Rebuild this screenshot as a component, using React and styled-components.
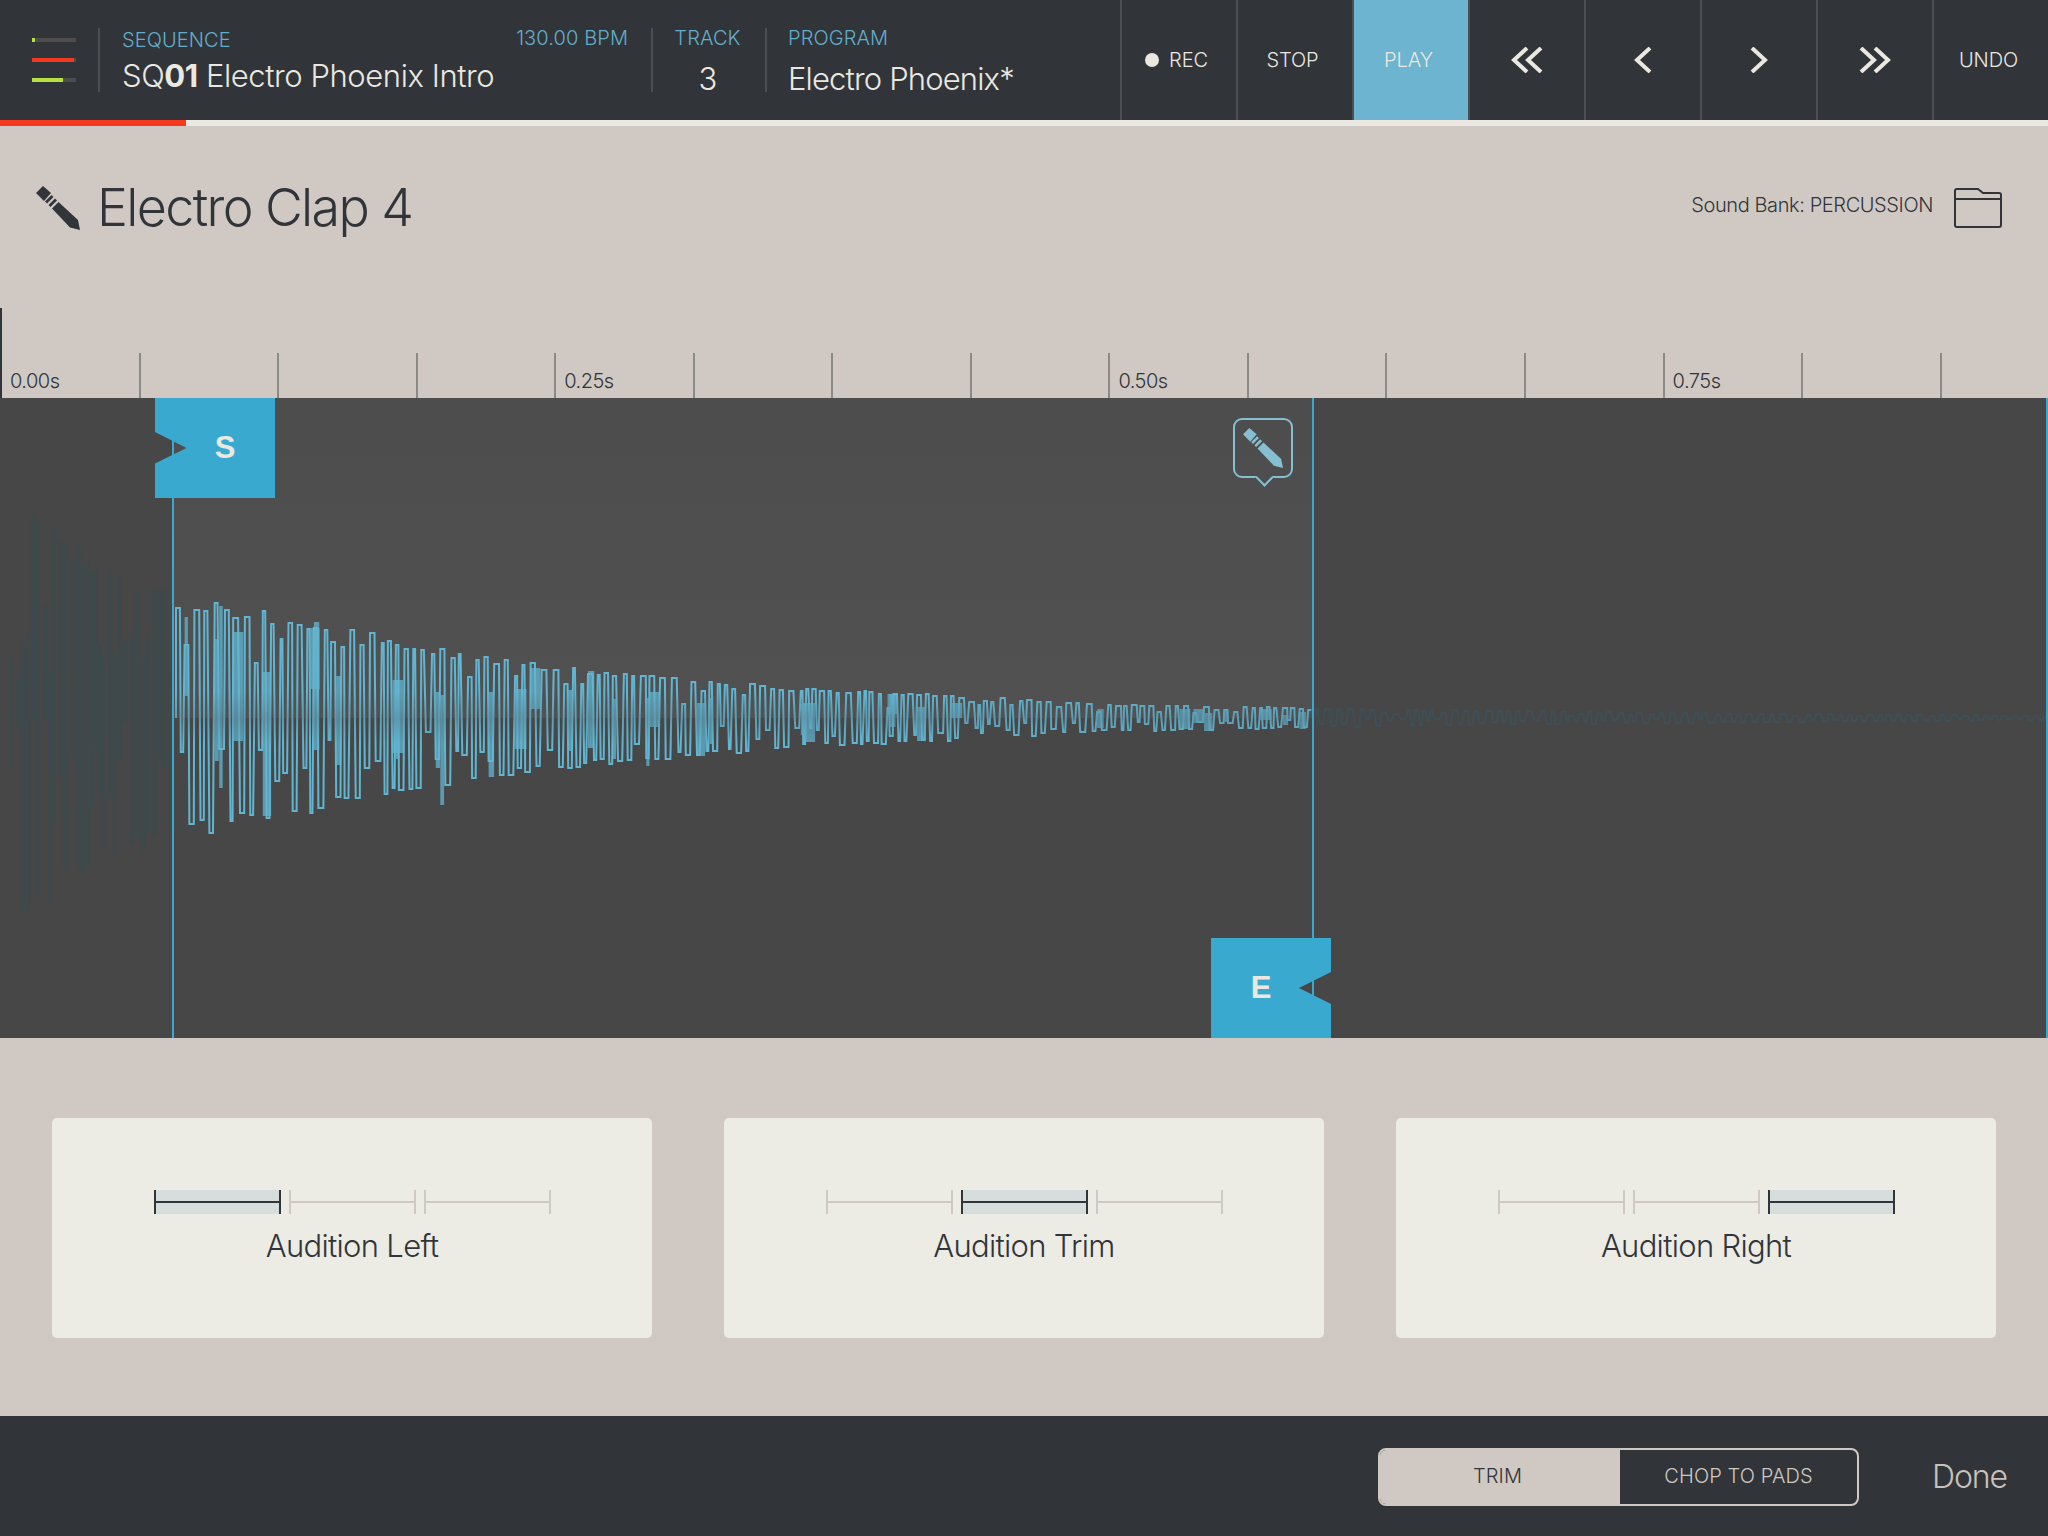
import React from "react";
import styled, { createGlobalStyle } from "styled-components";

const GlobalStyle = createGlobalStyle`
  html, body {
    margin: 0;
    padding: 0;
    background: #d0c9c3;
    font-family: "Inter", "Liberation Sans", sans-serif;
    font-weight: 300;
  }
  * { box-sizing: border-box; }
`;

const Page = styled.div`
  width: 2048px;
  height: 1536px;
  display: flex;
  flex-direction: column;
  overflow: hidden;
  background: #d0c9c3;
`;

/* top bar */
const TopBar = styled.header`
  height: 120px;
  display: flex;
  align-items: center;
  background: #313539;
  color: #ebe8e1;
`;

const Meters = styled.div`
  width: 98px;
  padding-left: 32px;
  display: flex;
  flex-direction: column;
  gap: 16px;
`;

const MeterTrack = styled.div`
  width: 44px;
  height: 4px;
  background: #4d4d4d;
`;

const MeterFill = styled.div`
  height: 100%;
  background: ${(p) => p.$color};
`;

const VDivider = styled.div`
  width: 2px;
  height: 64px;
  background: #4c4e50;
  flex: 0 0 auto;
`;

const InfoBlock = styled.div`
  width: ${(p) => p.$width}px;
  height: 64px;
  padding: 0 ${(p) => p.$right || 0}px 0 ${(p) => p.$left || 0}px;
  display: flex;
  flex-direction: column;
  align-items: ${(p) => (p.$center ? "center" : "stretch")};
`;

const LabelRow = styled.div`
  flex: 0 0 auto;
  display: flex;
  justify-content: space-between;
  height: 30px;
`;

const Label = styled.span`
  font-size: 20px;
  line-height: 20px;
  letter-spacing: 0.1px;
  color: #62aecb;
  margin-top: ${(p) => p.$top || 0}px;
`;

const InfoValue = styled.div`
  flex: 0 0 auto;
  font-size: 31px;
  line-height: 34px;
  letter-spacing: ${(p) => p.$spacing ?? -0.85}px;
  white-space: nowrap;
  margin-top: ${(p) => p.$top || 0}px;
  b {
    font-weight: 700;
  }
`;

const Transport = styled.nav`
  flex: 1;
  height: 120px;
  display: flex;
`;

const TransportButton = styled.button`
  flex: 1;
  height: 100%;
  padding: 0;
  border: 0;
  border-left: 2px solid #4c4e50;
  background: ${(p) => (p.$active ? "#6cb4d0" : "transparent")};
  color: #ebe8e1;
  font-family: inherit;
  font-weight: 300;
  font-size: 20px;
  letter-spacing: -0.1px;
  display: flex;
  align-items: center;
  justify-content: center;
  gap: 10px;
`;

const TransportLabel = styled.span`
  margin-right: 5px;
  display: flex;
  align-items: center;
  gap: 10px;
`;

const RecDot = styled.span`
  width: 14px;
  height: 14px;
  border-radius: 50%;
  background: #ebe8e1;
`;

/* progress strip */
const ProgressStrip = styled.div`
  height: 6px;
  background: #ebe8e1;
`;

const ProgressFill = styled.div`
  height: 100%;
  background: #f4391f;
`;

/* title row */
const TitleRow = styled.div`
  height: 182px;
  padding: 60px 46px 0 36px;
  display: flex;
  align-items: flex-start;
  color: #31353a;
`;

const SampleTitle = styled.h1`
  margin: 0 0 0 17px;
  font-size: 52px;
  line-height: 44px;
  font-weight: 300;
  letter-spacing: -1.65px;
  flex: 1;
`;

const BankName = styled.span`
  font-size: 20px;
  line-height: 24px;
  letter-spacing: -0.4px;
  margin: 7px 21px 0 0;
`;

const FolderWrap = styled.div`
  margin-top: 2px;
`;

/* ruler */
const Ruler = styled.div`
  height: 90px;
  display: flex;
  align-items: flex-end;
  overflow: hidden;
`;

const RulerSegment = styled.div`
  flex: 0 0 138.55px;
  height: ${(p) => (p.$tall ? 90 : 45)}px;
  border-left: 2px solid ${(p) => (p.$tall ? "#31353a" : "#8c8a85")};
  display: flex;
  align-items: flex-end;
  padding: 0 0 6.5px 8px;
  font-size: 20px;
  line-height: 22px;
  letter-spacing: -0.5px;
  color: #31353a;
`;

/* wave panel */
const WavePanel = styled.section`
  position: relative;
  height: 640px;
  background: #474747;
  border-right: 2px solid #3aa9cf;
  overflow: hidden;
`;

const TrimShade = styled.div`
  position: absolute;
  left: 173px;
  top: 0;
  width: 1140px;
  height: 320px;
  background: linear-gradient(#4d4d4d, #515151);
`;

const WaveDrawing = styled.svg`
  position: absolute;
  left: 0;
  top: 0;
`;

const MarkerLine = styled.div`
  position: absolute;
  left: ${(p) => p.$x}px;
  top: 0;
  width: 2px;
  height: 100%;
  background: #3aa9cf;
`;

const Flag = styled.div`
  position: absolute;
  left: ${(p) => p.$x}px;
  top: ${(p) => p.$y}px;
  width: 120px;
  height: 100px;
  background: #3aa9cf;
  color: #ebe8e1;
  font-family: "Liberation Sans", sans-serif;
  font-size: 31px;
  font-weight: 700;
  display: flex;
  align-items: center;
  justify-content: center;
  padding: ${(p) => (p.$side === "left" ? "0 0 0 20px" : "0 20px 0 0")};
  clip-path: ${(p) =>
    p.$side === "left"
      ? "polygon(0 0, 100% 0, 100% 100%, 0 100%, 0 65.5%, 31.5px 50%, 0 34%)"
      : "polygon(0 0, 100% 0, 100% 34%, 88px 50%, 100% 66%, 100% 100%, 0 100%)"};
`;

const EditBubble = styled.div`
  position: absolute;
  left: 1233px;
  top: 20px;
  width: 60px;
  height: 60px;
  border: 2px solid #86bfd2;
  border-radius: 9px;
  display: flex;
  align-items: center;
  justify-content: center;
  &::after {
    content: "";
    position: absolute;
    left: 23px;
    bottom: -8px;
    width: 11px;
    height: 11px;
    background: #4e4e4e;
    border-right: 2px solid #86bfd2;
    border-bottom: 2px solid #86bfd2;
    transform: rotate(45deg);
  }
`;

/* audition cards */
const AuditionRow = styled.section`
  height: 378px;
  padding: 80px 52px 0;
  display: grid;
  grid-template-columns: repeat(3, 600px);
  column-gap: 72px;
  align-items: start;
`;

const AuditionCard = styled.div`
  height: 220px;
  background: #ecebe4;
  border-radius: 5px;
  padding-top: 72px;
  display: flex;
  flex-direction: column;
  align-items: center;
  color: #31353a;
`;

const RangeBar = styled.div`
  display: flex;
  gap: 8px;
`;

const RangePart = styled.div`
  width: 127px;
  height: 24px;
  background: ${(p) => (p.$on ? "#d5dedd" : "transparent")};
  border-left: 2px solid ${(p) => (p.$on ? "#31353a" : "#d0c9c3")};
  border-right: 2px solid ${(p) => (p.$on ? "#31353a" : "#d0c9c3")};
  display: flex;
  align-items: center;
  &::before {
    content: "";
    display: block;
    width: 100%;
    height: 2px;
    background: ${(p) => (p.$on ? "#31353a" : "#d0c9c3")};
  }
`;

const AuditionLabel = styled.div`
  margin-top: 13px;
  font-size: 31px;
  line-height: 38px;
  letter-spacing: -0.7px;
`;

/* bottom bar */
const BottomBar = styled.footer`
  height: 120px;
  background: #313539;
  display: flex;
  align-items: center;
  justify-content: flex-end;
  padding: 0 41px 0 0;
`;

const ModeSwitch = styled.div`
  width: 481px;
  height: 58px;
  margin: 2px 73px 0 0;
  border: 2px solid #d0c9c3;
  border-radius: 8px;
  overflow: hidden;
  display: grid;
  grid-template-columns: 240px 1fr;
`;

const ModeOption = styled.button`
  border: 0;
  padding: 0 ${(p) => (p.$active ? 5 : 0)}px 2px 0;
  background: ${(p) => (p.$active ? "#d0c9c3" : "transparent")};
  color: ${(p) => (p.$active ? "#31353a" : "#d0c9c3")};
  font-family: inherit;
  font-weight: 300;
  font-size: 20px;
  letter-spacing: 0.1px;
`;

const DoneButton = styled.button`
  border: 0;
  padding: 0;
  background: transparent;
  color: #c9c2bc;
  font-family: inherit;
  font-weight: 300;
  font-size: 32px;
  letter-spacing: -1.1px;
`;

const PencilIcon = ({ size = 44, color = "#31353a" }) => (
  <svg width={size} height={size} viewBox="0 0 44 44" fill={color}>
    <polygon points="0,7 7,0 15,7 8,15" />
    <polygon points="9,15.5 15.5,9 17.5,11 11,17.5" />
    <polygon points="12.5,19 19,12.5 21,14.5 14.5,21" />
    <polygon points="16,22.5 22.5,16 42,34 44,44 34,41.5" />
  </svg>
);

const FolderIcon = () => (
  <svg width="48" height="40" viewBox="0 0 48 40" fill="none" stroke="#31353a" strokeWidth="2">
    <path d="M1 3a2 2 0 0 1 2-2h21l5 4h16a2 2 0 0 1 2 2v30a2 2 0 0 1-2 2H3a2 2 0 0 1-2-2z" />
    <path d="M1 11h46" />
  </svg>
);

const Chevrons = ({ dir, count }) => {
  const width = count === 2 ? 32 : 18;
  const pts = [];
  for (let i = 0; i < count; i++) {
    const o = i * 14;
    pts.push(dir === "left" ? `${16 + o},1 ${3 + o},13 ${16 + o},25` : `${2 + o},1 ${15 + o},13 ${2 + o},25`);
  }
  return (
    <svg width={width} height="26" viewBox={`0 0 ${width} 26`} fill="none" stroke="#ebe8e1" strokeWidth="4">
      {pts.map((p) => (
        <polyline key={p} points={p} />
      ))}
    </svg>
  );
};

/* the wave is made up, seeded so that it is the same every time */
function makeRandom(seed) {
  let s = seed;
  return () => {
    s = (s * 1664525 + 1013904223) % 4294967296;
    return s / 4294967296;
  };
}

function envelope(points, x) {
  for (let i = 1; i < points.length; i++) {
    if (x <= points[i][0]) {
      const [x0, a0] = points[i - 1];
      const [x1, a1] = points[i];
      return a0 + ((a1 - a0) * (x - x0)) / (x1 - x0);
    }
  }
  return points[points.length - 1][1];
}

const CY = 320;

function makeWave(from, to, env, seed, minStep, maxStep) {
  const rnd = makeRandom(seed);
  let x = from;
  let up = true;
  let d = `M${from} ${CY}`;
  const blocks = [];
  while (x < to - 2) {
    const a = envelope(env, x);
    const r = rnd();
    const depth = up
      ? r < 0.75
        ? 1 - rnd() * 0.12
        : 0.35 + rnd() * 0.5
      : r < 0.6
        ? 1 - rnd() * 0.15
        : 0.15 + rnd() * 0.6;
    const y = Math.round(CY + (up ? -a : a) * depth);
    const flat = 1.5 + rnd() * 3.5;
    d += `L${x.toFixed(1)} ${y}L${Math.min(x + flat, to).toFixed(1)} ${y}`;
    const w = 3 + rnd() * 9;
    if (rnd() < 0.16 && x + w < to) {
      blocks.push({
        x,
        w,
        y: Math.round(CY - a * (0.3 + rnd() * 0.7)),
        h: Math.round(a * (0.6 + rnd() * 1.1)),
      });
    }
    x += flat + minStep + rnd() * (maxStep - minStep);
    up = !up;
  }
  return { d, blocks };
}

function makeBars(from, to, env, seed) {
  const rnd = makeRandom(seed);
  let d = "";
  for (let x = from; x < to; x += 3 + rnd() * 5) {
    const a = envelope(env, x);
    const top = 317 - a * (rnd() < 0.6 ? 0.9 + rnd() * 0.1 : 0.2 + rnd() * 0.5);
    const bottom = 317 + a * (rnd() < 0.5 ? 0.85 + rnd() * 0.15 : rnd() * 0.6);
    d += `M${x.toFixed(1)} ${Math.round(top)}V${Math.round(bottom)}`;
  }
  return d;
}

const activeEnv = [
  [175, 124],
  [300, 100],
  [490, 60],
  [590, 48],
  [650, 42],
  [800, 30],
  [1000, 20],
  [1100, 14],
  [1313, 10],
];
const tailEnv = [
  [1316, 10],
  [1500, 7],
  [1800, 4],
  [2048, 2],
];
const leadEnv = [
  [10, 30],
  [22, 215],
  [70, 176],
  [100, 150],
  [172, 130],
];

const leadBars = makeBars(12, 172, leadEnv, 11);
const activeWave = makeWave(176, 1312, activeEnv, 29, 0.5, 2);
const tailWave = makeWave(1316, 2048, tailEnv, 47, 1, 3);

const Waveform = () => (
  <WaveDrawing width="2048" height="640" viewBox="0 0 2048 640" fill="none" strokeLinejoin="miter">
    <defs>
      <linearGradient id="waveTone" gradientUnits="userSpaceOnUse" x1="0" y1="190" x2="0" y2="450">
        <stop offset="0" stopColor="#62b5d1" />
        <stop offset="0.4" stopColor="#62b5d1" />
        <stop offset="0.5" stopColor="#5c9cb3" />
        <stop offset="0.6" stopColor="#62b5d1" />
        <stop offset="1" stopColor="#62b5d1" />
      </linearGradient>
    </defs>
    <path d="M0 317H12" stroke="#3f4a4c" strokeWidth="2" />
    <path d={leadBars} stroke="#3e494c" strokeWidth="4" />
    {activeWave.blocks.map((b) => (
      <rect key={b.x} x={b.x} y={b.y} width={b.w} height={b.h} fill="url(#waveTone)" fillOpacity="0.75" />
    ))}
    <path d={activeWave.d} stroke="url(#waveTone)" strokeWidth="2" />
    <path d={tailWave.d} stroke="#3e5056" strokeWidth="2" />
  </WaveDrawing>
);

const RULER_LABELS = { 0: "0.00s", 4: "0.25s", 8: "0.50s", 12: "0.75s" };

const CARDS = [
  { label: "Audition Left", on: 0 },
  { label: "Audition Trim", on: 1 },
  { label: "Audition Right", on: 2 },
];

export default function App() {
  return (
    <Page>
      <GlobalStyle />
      <TopBar>
        <Meters>
          <MeterTrack>
            <MeterFill $color="#b9e040" style={{ width: "7%" }} />
          </MeterTrack>
          <MeterTrack>
            <MeterFill $color="#f4391f" style={{ width: "95%" }} />
          </MeterTrack>
          <MeterTrack>
            <MeterFill $color="#b9e040" style={{ width: "70%" }} />
          </MeterTrack>
        </Meters>
        <VDivider />
        <InfoBlock $width={551} $left={22} $right={23}>
          <LabelRow>
            <Label $top={2}>SEQUENCE</Label>
            <Label>130.00 BPM</Label>
          </LabelRow>
          <InfoValue $top={1} $spacing={-0.43}>
            SQ<b>01</b> Electro Phoenix Intro
          </InfoValue>
        </InfoBlock>
        <VDivider />
        <InfoBlock $width={112} $center $right={3}>
          <LabelRow>
            <Label>TRACK</Label>
          </LabelRow>
          <InfoValue $top={4}>3</InfoValue>
        </InfoBlock>
        <VDivider />
        <InfoBlock $width={353} $left={21}>
          <LabelRow>
            <Label>PROGRAM</Label>
          </LabelRow>
          <InfoValue $top={4}>Electro Phoenix*</InfoValue>
        </InfoBlock>
        <Transport>
          <TransportButton>
            <TransportLabel>
              <RecDot />
              REC
            </TransportLabel>
          </TransportButton>
          <TransportButton>
            <TransportLabel>STOP</TransportLabel>
          </TransportButton>
          <TransportButton $active>
            <TransportLabel>PLAY</TransportLabel>
          </TransportButton>
          <TransportButton aria-label="start">
            <Chevrons dir="left" count={2} />
          </TransportButton>
          <TransportButton aria-label="back">
            <Chevrons dir="left" count={1} />
          </TransportButton>
          <TransportButton aria-label="forward">
            <Chevrons dir="right" count={1} />
          </TransportButton>
          <TransportButton aria-label="end">
            <Chevrons dir="right" count={2} />
          </TransportButton>
          <TransportButton>
            <TransportLabel>UNDO</TransportLabel>
          </TransportButton>
        </Transport>
      </TopBar>
      <ProgressStrip>
        <ProgressFill style={{ width: 186 }} />
      </ProgressStrip>

      <TitleRow>
        <PencilIcon />
        <SampleTitle>Electro Clap 4</SampleTitle>
        <BankName>Sound Bank: PERCUSSION</BankName>
        <FolderWrap>
          <FolderIcon />
        </FolderWrap>
      </TitleRow>

      <Ruler>
        {Array.from({ length: 15 }, (_, i) => (
          <RulerSegment key={i} $tall={i === 0}>
            {RULER_LABELS[i]}
          </RulerSegment>
        ))}
      </Ruler>

      <WavePanel>
        <TrimShade />
        <Waveform />
        <MarkerLine $x={172} />
        <MarkerLine $x={1312} />
        <Flag $side="left" $x={155} $y={0}>
          S
        </Flag>
        <Flag $side="right" $x={1211} $y={540}>
          E
        </Flag>
        <EditBubble>
          <PencilIcon size={40} color="#86bfd2" />
        </EditBubble>
      </WavePanel>

      <AuditionRow>
        {CARDS.map((card) => (
          <AuditionCard key={card.label}>
            <RangeBar>
              {[0, 1, 2].map((i) => (
                <RangePart key={i} $on={i === card.on} />
              ))}
            </RangeBar>
            <AuditionLabel>{card.label}</AuditionLabel>
          </AuditionCard>
        ))}
      </AuditionRow>

      <BottomBar>
        <ModeSwitch>
          <ModeOption $active>TRIM</ModeOption>
          <ModeOption>CHOP TO PADS</ModeOption>
        </ModeSwitch>
        <DoneButton>Done</DoneButton>
      </BottomBar>
    </Page>
  );
}
